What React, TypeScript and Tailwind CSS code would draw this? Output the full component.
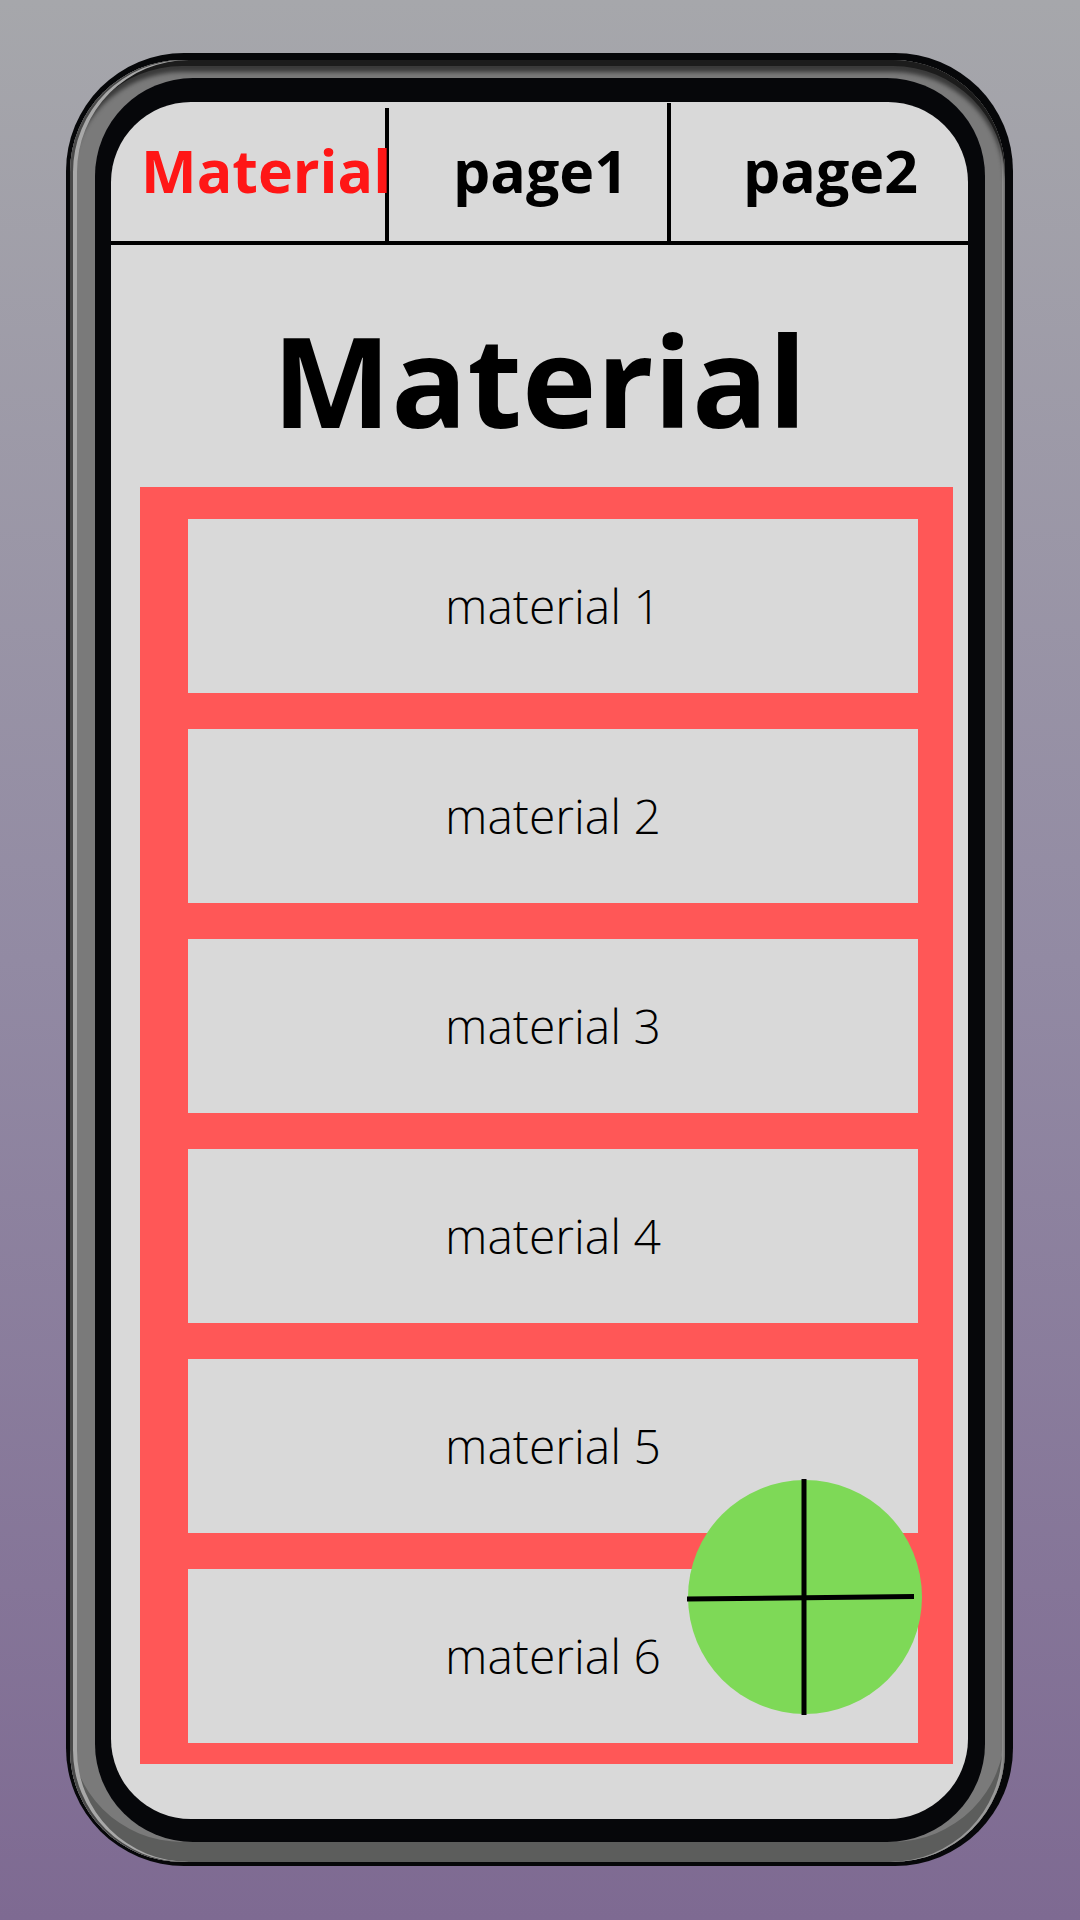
import React from 'react'

const materials = ['material 1', 'material 2', 'material 3', 'material 4', 'material 5', 'material 6']

function AddButton() {
    return (
        <svg width="236" height="236" viewBox="0 0 236 236" className="block">
            <circle cx="118" cy="118" r="117" fill="#7ed957" />
            <line x1="117" y1="0" x2="117" y2="236" stroke="#000" strokeWidth="5" />
            <line x1="0" y1="120" x2="227" y2="117.5" stroke="#000" strokeWidth="5" />
        </svg>
    )
}

export default function App() {
    return (
        <div
            className="w-[1080px] h-[1920px] overflow-hidden bg-linear-to-b from-[#a6a7ab] via-[#928aa3] to-[#7e6a92] pt-[53px] pl-[66px]"
            style={{ fontFamily: '"Open Sans", "Liberation Sans", sans-serif' }}
        >
            {/* Phone: outline -> gray rim -> black bezel -> screen */}
            <div className="w-[947px] h-[1813px] rounded-[118px] bg-[#060709] pl-[4px] pt-[7px] pr-[8px] pb-[4px]">
                <div className="w-full h-full rounded-[112px] bg-[#7a7a7a] shadow-[inset_3px_0_0_#4a4a4a,inset_7px_0_0_#a8a8a8,inset_0_6px_0_#1c1c1c,inset_0_12px_4px_#3a3a3a,inset_-3px_0_0_#9a9a9a,inset_0_-20px_0_#5c5d5c] pl-[25px] pt-[18px] pr-[20px] pb-[20px]">
                    <div className="w-full h-full rounded-[98px] bg-[#06070a] pl-[16px] pt-[24px] pr-[17px] pb-[23px]">
                        <div className="relative w-full h-full rounded-[80px] bg-[#d9d9d9] overflow-hidden flex flex-col">
                            {/* Tabs */}
                            <div className="flex h-[143px] border-b-4 border-black shrink-0">
                                <div className="w-[274px] pl-[30px] pt-[39px]">
                                    <span className="relative z-10 whitespace-nowrap text-[59px] leading-none font-bold text-[#ff1616]">
                                        Material
                                    </span>
                                </div>
                                <div className="w-[4px] mt-[6px] bg-black" />
                                <div className="w-[278px] pl-[64px] pt-[39px]">
                                    <span className="whitespace-nowrap text-[59px] leading-none font-bold text-black">
                                        page1
                                    </span>
                                </div>
                                <div className="w-[4px] mt-[1px] bg-black" />
                                <div className="flex-1 pl-[72px] pt-[39px]">
                                    <span className="whitespace-nowrap text-[59px] leading-none font-bold text-black">
                                        page2
                                    </span>
                                </div>
                            </div>

                            {/* Title */}
                            <h1 className="mt-[71px] mb-[45px] h-[126px] text-center text-[126px] leading-none font-bold text-black">
                                Material
                            </h1>

                            {/* Material list */}
                            <div className="ml-[29px] w-[813px] bg-[#ff5757] pt-[32px] pb-[21px] pl-[48px] pr-[35px] flex flex-col gap-[36px]">
                                {materials.map((m) => (
                                    <div
                                        key={m}
                                        className="h-[174px] bg-[#d9d9d9] flex items-center justify-center text-[48px] leading-none font-light text-black"
                                    >
                                        {m}
                                    </div>
                                ))}
                            </div>

                            {/* Floating add button */}
                            <div className="absolute left-[576px] top-[1377px]">
                                <AddButton />
                            </div>
                        </div>
                    </div>
                </div>
            </div>
        </div>
    )
}
